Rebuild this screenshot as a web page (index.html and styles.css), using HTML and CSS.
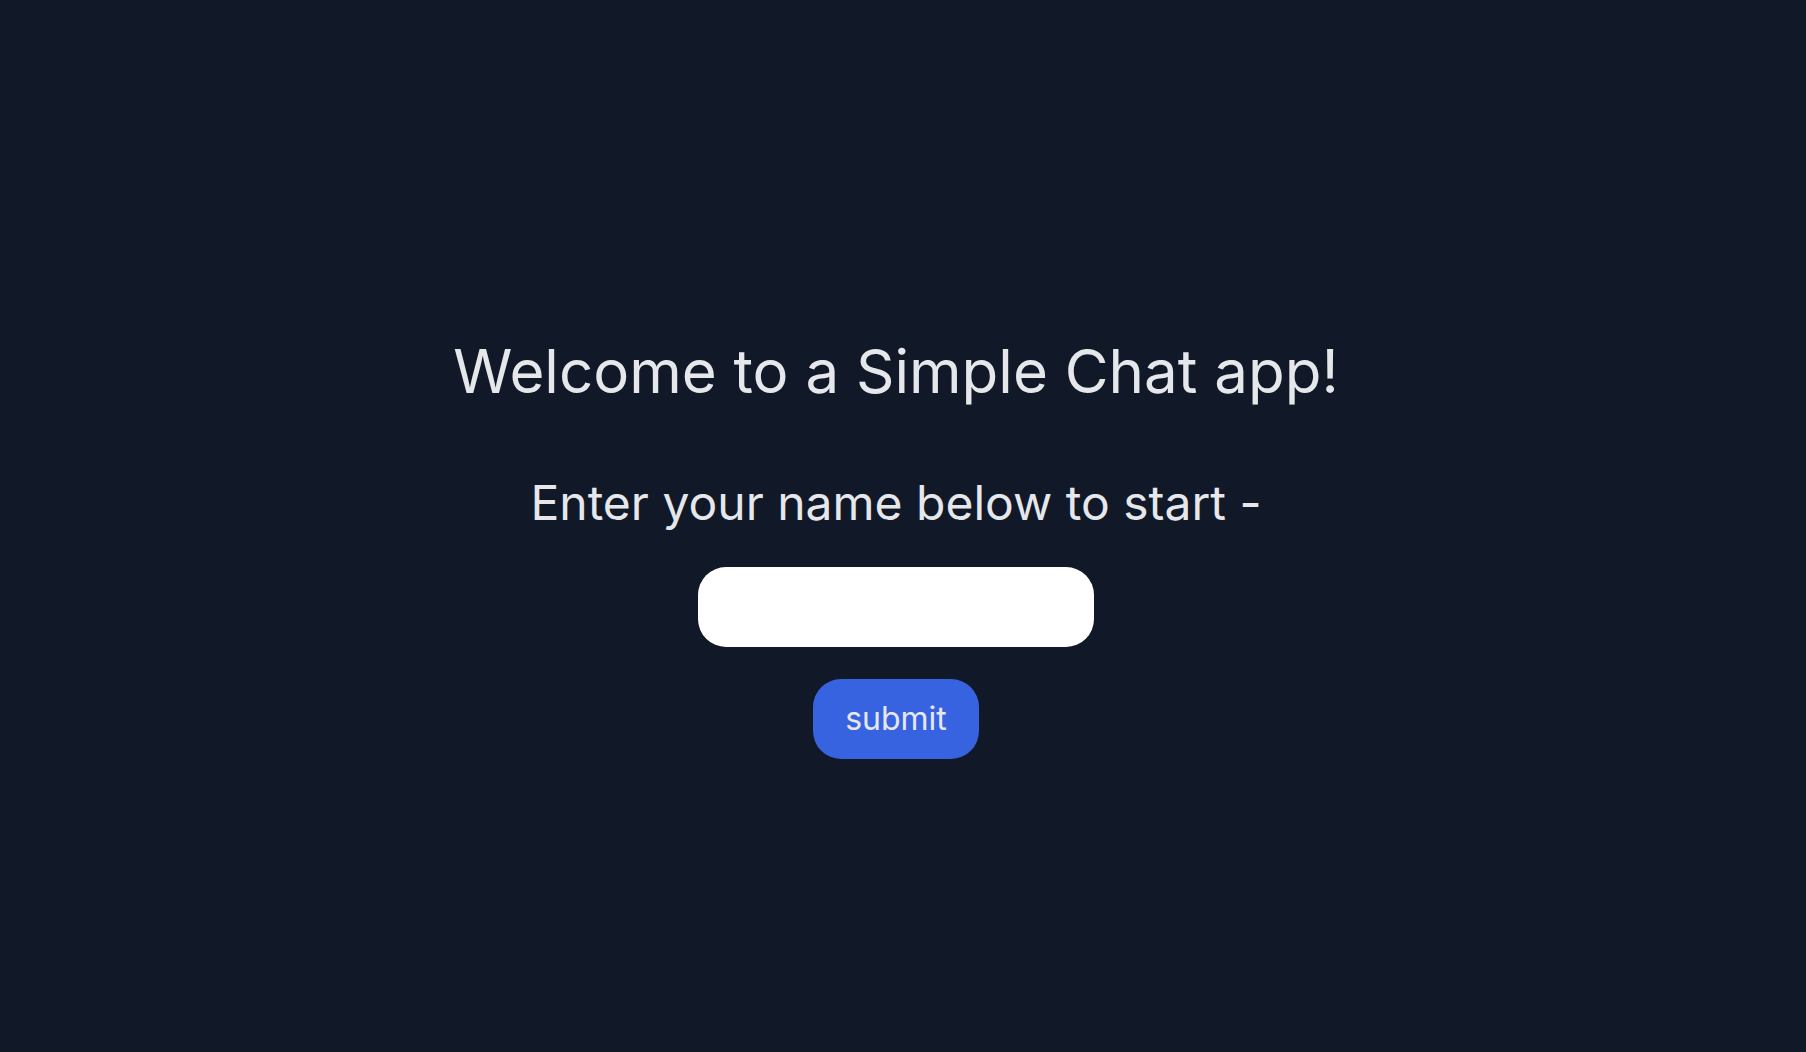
FILE: index.html
```html
<!DOCTYPE html>
<html lang="en">
<head>
<meta charset="utf-8">
<title>Simple Chat</title>
<link rel="stylesheet" href="styles.css">
</head>
<body>
<main class="welcome">
  <h1 class="title">Welcome to a Simple Chat app!</h1>
  <h2 class="subtitle">Enter your name below to start -</h2>
  <input class="name-input" type="text" aria-label="name">
  <button class="submit-btn" type="button">submit</button>
</main>
</body>
</html>
```

FILE: styles.css
```css
html, body {
  margin: 0;
  padding: 0;
  height: 100%;
}
body {
  background: #111827;
  color: #e5e7eb;
  font-family: Inter, "Noto Sans", sans-serif;
}
.welcome {
  display: flex;
  flex-direction: column;
  align-items: center;
  padding-top: 341px;
  padding-right: 14px;
}
.title {
  margin: 0;
  font-size: 60px;
  font-weight: 400;
  line-height: 60px;
}
.subtitle {
  margin: 78px 0 0;
  font-size: 48px;
  font-weight: 400;
  line-height: 48px;
}
.name-input {
  margin-top: 40px;
  box-sizing: border-box;
  width: 396px;
  height: 80px;
  border: none;
  border-radius: 28px;
  background: #ffffff;
  outline: none;
  padding: 0 20px;
  font-family: inherit;
  font-size: 24px;
}
.submit-btn {
  margin-top: 32px;
  box-sizing: border-box;
  width: 166px;
  height: 80px;
  border: none;
  border-radius: 28px;
  background: #3863e0;
  color: #e5e7eb;
  font-family: inherit;
  font-size: 32px;
  line-height: 32px;
  padding: 0;
}
```
